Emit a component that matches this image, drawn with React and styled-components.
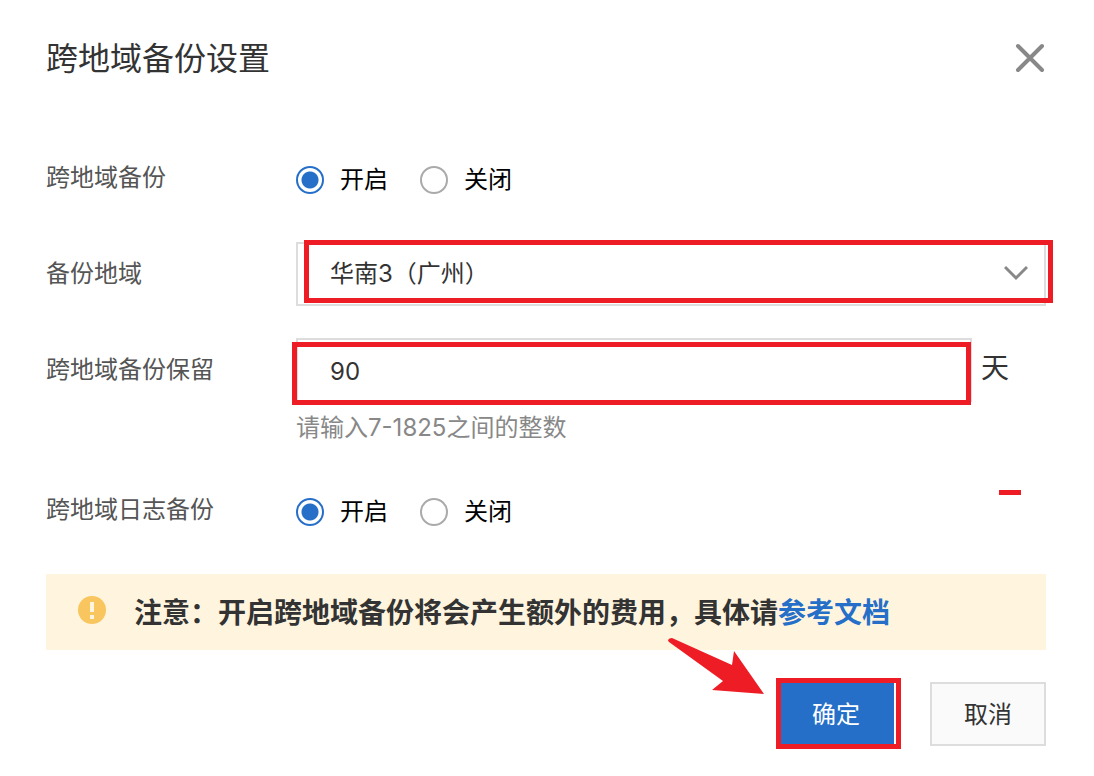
import React, { useState } from "react";
import styled, { createGlobalStyle, css } from "styled-components";

const colors = {
  blue: "#266fc8",
  mark: "#ee1c25",
  line: "#dddddd",
  text: "#333333",
  label: "#555555",
  muted: "#888888",
};

const GlobalStyle = createGlobalStyle`
  * { box-sizing: border-box; }
  body {
    margin: 0;
    background: #ffffff;
    color: ${colors.text};
    font-family: Inter, "Noto Sans CJK SC", sans-serif;
    font-size: 24px;
    line-height: 36px;
  }
  button, input, select { font: inherit; color: inherit; }
`;

const Dialog = styled.main`
  padding: 34px 48px 30px 46px;
`;

const Header = styled.header`
  display: flex;
  align-items: center;
  justify-content: space-between;
  height: 48px;
  margin-bottom: 66px;
`;

const Title = styled.h1`
  margin: 0;
  padding-top: 2px;
  font-size: 32px;
  line-height: 48px;
  font-weight: 400;
`;

const CloseButton = styled.button`
  display: flex;
  padding: 0;
  border: 0;
  background: none;
  color: ${colors.muted};
  cursor: pointer;
`;

const Form = styled.form`
  display: flex;
  flex-direction: column;
`;

const Row = styled.div`
  display: grid;
  grid-template-columns: 250px minmax(0, 1fr);
  align-items: start;
  margin-bottom: ${(p) => p.$gap || 32}px;
`;

const labelStyle = css`
  line-height: 36px;
  color: ${colors.label};
`;

const Label = styled.label`
  ${labelStyle}
  padding-top: 14px;
`;

const GroupLabel = styled.span`
  ${labelStyle}
  padding-top: 12px;
`;

const RadioGroup = styled.div`
  display: flex;
  align-items: center;
  gap: 32px;
  height: 64px;
`;

const RadioLabel = styled.label`
  display: flex;
  align-items: center;
  gap: 16px;
  color: #000000;
  cursor: pointer;
`;

const RadioInput = styled.input`
  appearance: none;
  width: 28px;
  height: 28px;
  margin: 0;
  border: 2px solid #aaaaaa;
  border-radius: 50%;
  background: #ffffff;

  &:checked {
    border-color: ${colors.blue};
    background: radial-gradient(circle, ${colors.blue} 8px, #ffffff 9px);
  }
`;

const Field = styled.div`
  position: relative;
  display: flex;
  flex: 1;
`;

const controlStyle = css`
  width: 100%;
  height: 64px;
  padding: 0 32px;
  border: 2px solid ${colors.line};
  border-radius: 0;
  background: #ffffff;
  outline: none;
`;

const Select = styled.select`
  ${controlStyle}
  appearance: none;
`;

const TextInput = styled.input`
  ${controlStyle}
  padding-top: 2px;
`;

const Chevron = styled.svg`
  position: absolute;
  top: 22px;
  right: 18px;
  pointer-events: none;
`;

const Suffixed = styled.div`
  display: flex;
  gap: 9px;
`;

const Unit = styled.span`
  width: 65px;
  padding-top: 10px;
  font-size: 28px;
  line-height: 40px;
`;

const Hint = styled.p`
  margin: 0;
  padding: 8px 0 6px;
  color: ${colors.muted};
`;

const Notice = styled.div`
  display: flex;
  align-items: center;
  gap: 28px;
  min-height: 76px;
  margin-bottom: 32px;
  padding: 2px 32px 0;
  background: #fff5df;
  font-size: 28px;
  line-height: 40px;
  font-weight: 700;
`;

const NoticeIcon = styled.svg`
  flex: none;
  margin-bottom: 6px;
`;

const DocLink = styled.a`
  color: ${colors.blue};
  text-decoration: none;
`;

const Footer = styled.footer`
  display: flex;
  justify-content: flex-end;
  gap: 36px;
`;

const ButtonSlot = styled.div`
  position: relative;
`;

const Button = styled.button`
  width: 116px;
  height: 64px;
  padding: 2px 0 0;
  border: 2px solid ${(p) => (p.$primary ? colors.blue : colors.line)};
  background: ${(p) => (p.$primary ? colors.blue : "#fafafa")};
  color: ${(p) => (p.$primary ? "#ffffff" : colors.text)};
  cursor: pointer;
`;

const Highlight = styled.span`
  position: absolute;
  top: ${(p) => p.$top}px;
  right: ${(p) => p.$right}px;
  bottom: ${(p) => p.$bottom}px;
  left: ${(p) => p.$left}px;
  border: 5px solid ${colors.mark};
  pointer-events: none;
`;

const Dash = styled.span`
  position: absolute;
  top: 10px;
  right: 25px;
  width: 22px;
  height: 5px;
  background: ${colors.mark};
`;

const Arrow = styled.svg`
  position: absolute;
  right: 130px;
  bottom: 51px;
  pointer-events: none;
`;

function Switch({ name, title }) {
  const [value, setValue] = useState("on");
  return (
    <RadioGroup role="radiogroup" aria-label={title}>
      {[["on", "开启"], ["off", "关闭"]].map(([key, text]) => (
        <RadioLabel key={key}>
          <RadioInput
            type="radio"
            name={name}
            checked={value === key}
            onChange={() => setValue(key)}
          />
          {text}
        </RadioLabel>
      ))}
    </RadioGroup>
  );
}

export default function App() {
  return (
    <>
      <GlobalStyle />
      <Dialog>
        <Header>
          <Title>跨地域备份设置</Title>
          <CloseButton type="button" aria-label="关闭">
            <svg width="32" height="32" viewBox="0 0 32 32" fill="none" stroke="currentColor" strokeWidth="4" strokeLinecap="round">
              <path d="M4 4l24 24M28 4L4 28" />
            </svg>
          </CloseButton>
        </Header>
        <Form onSubmit={(e) => e.preventDefault()}>
          <Row $gap={30}>
            <GroupLabel>跨地域备份</GroupLabel>
            <Switch name="backup" title="跨地域备份" />
          </Row>
          <Row>
            <Label htmlFor="region">备份地域</Label>
            <Field>
              <Select id="region" defaultValue="gz">
                <option value="gz">华南3（广州）</option>
              </Select>
              <Chevron width="24" height="18" viewBox="0 0 24 18" fill="none" stroke={colors.muted} strokeWidth="3">
                <path d="M1 3l11 11L23 3" />
              </Chevron>
              <Highlight $top={-2} $right={-7} $bottom={3} $left={8} />
            </Field>
          </Row>
          <Row $gap={28}>
            <Label htmlFor="days">跨地域备份保留</Label>
            <div>
              <Suffixed>
                <Field>
                  <TextInput id="days" type="text" inputMode="numeric" defaultValue="90" />
                  <Highlight $top={4} $right={1} $bottom={-3} $left={-4} />
                </Field>
                <Unit>天</Unit>
              </Suffixed>
              <Hint>请输入7-1825之间的整数</Hint>
            </div>
          </Row>
          <Row $gap={30}>
            <GroupLabel>跨地域日志备份</GroupLabel>
            <Field>
              <Switch name="log" title="跨地域日志备份" />
              <Dash />
            </Field>
          </Row>
          <Notice>
            <NoticeIcon width="28" height="28" viewBox="0 0 28 28">
              <circle cx="14" cy="14" r="14" fill="#f9c55e" />
              <path d="M12 6h4v10h-4zM12 19h4v4h-4z" fill="#fff5df" />
            </NoticeIcon>
            <span>
              注意：开启跨地域备份将会产生额外的费用，具体请
              <DocLink href="#docs">参考文档</DocLink>
            </span>
          </Notice>
          <Footer>
            <ButtonSlot>
              <Button type="submit" $primary>确定</Button>
              <Highlight $top={-4} $right={-7} $bottom={-3} $left={-2} />
              <Arrow width="96" height="57" viewBox="0 0 96 57" fill={colors.mark}>
                <path d="M0 2Q1 0 4 0L64 27L66 13L96 56L44 52L55 43L1 4Q0 3 0 2Z" />
              </Arrow>
            </ButtonSlot>
            <Button type="button">取消</Button>
          </Footer>
        </Form>
      </Dialog>
    </>
  );
}
